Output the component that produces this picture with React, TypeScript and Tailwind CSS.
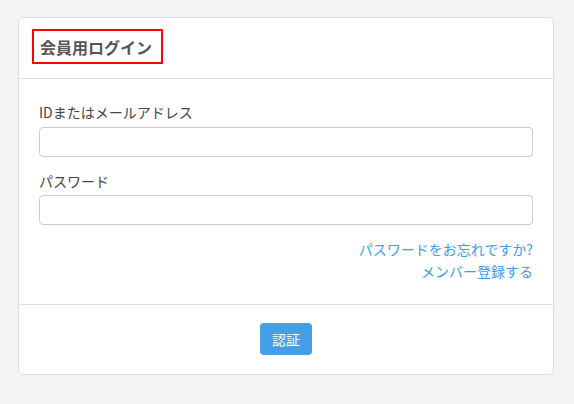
import React from 'react';

// Member login card
export default function App() {
  return (
    <div
      className="min-h-screen w-full bg-[#f4f4f4] pt-[17px] pl-[18px]"
      style={{ fontFamily: '"Noto Sans CJK JP", "Noto Sans", sans-serif' }}
    >
      <div className="w-[536px] rounded-[5px] border border-[#dddddd] bg-white">
        {/* Header */}
        <div className="h-[61px] border-b border-[#dddddd] pl-[13px] pt-[11px]">
          <div className="inline-flex h-[35px] w-[131px] items-center border-2 border-[#ff0000] pl-[6px]">
            <h1 className="text-[16px] font-bold leading-none text-[#555555]">会員用ログイン</h1>
          </div>
        </div>

        {/* Body */}
        <div className="px-[20px] pt-[23px] pb-[22px]">
          <label className="block text-[14px] leading-[20px] text-[#444444]">
            IDまたはメールアドレス
          </label>
          <input
            type="text"
            className="mt-[5px] block h-[30px] w-full rounded-[4px] border border-[#cccccc] px-2 text-sm outline-none"
          />
          <label className="mt-[14px] block text-[14px] leading-[20px] text-[#444444]">
            パスワード
          </label>
          <input
            type="password"
            className="mt-[4px] block h-[30px] w-full rounded-[4px] border border-[#cccccc] px-2 text-sm outline-none"
          />
          <div className="mt-[13px] flex flex-col items-end text-[14px] leading-[22px] text-[#3f9ce8]">
            <a href="#">パスワードをお忘れですか?</a>
            <a href="#">メンバー登録する</a>
          </div>
        </div>

        {/* Footer */}
        <div className="flex justify-center border-t border-[#dddddd] pt-[18px] pb-[19px]">
          <button className="h-[32px] w-[52px] rounded-[4px] bg-[#43a0e6] text-[14px] text-white">
            認証
          </button>
        </div>
      </div>
    </div>
  );
}
